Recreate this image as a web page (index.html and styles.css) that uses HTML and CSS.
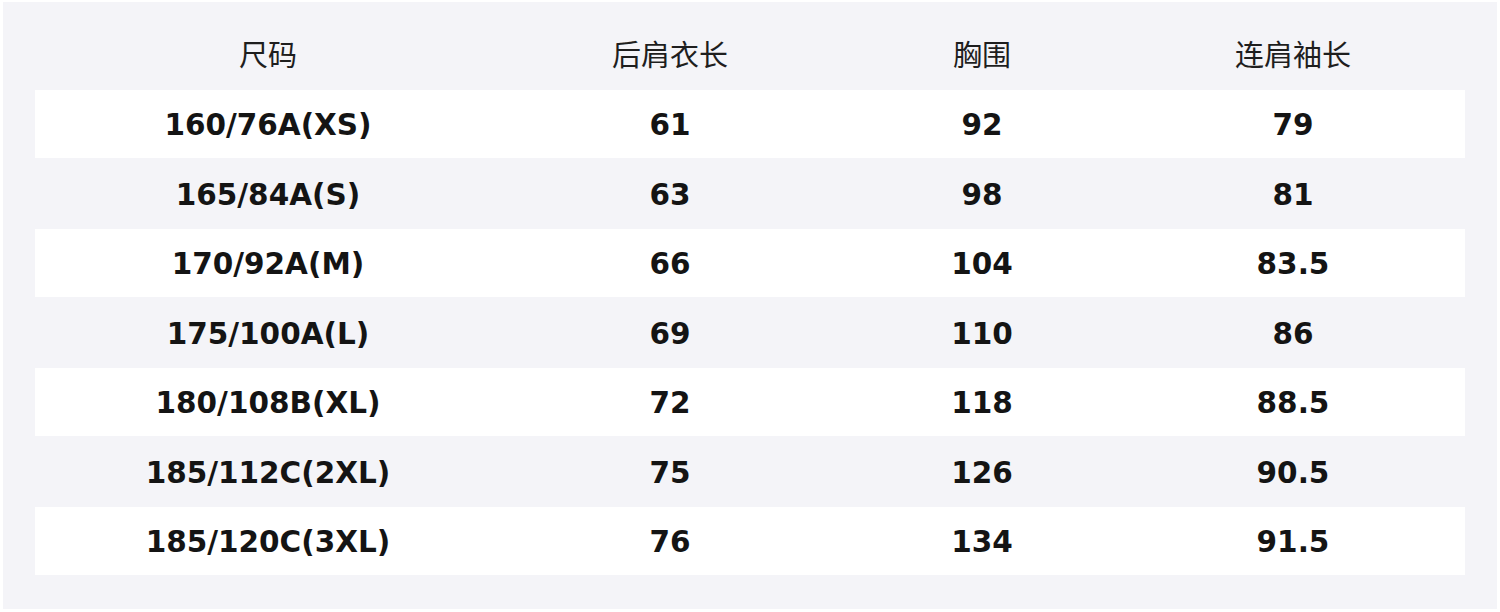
FILE: index.html
```html
<!DOCTYPE html>
<html lang="zh">
<head>
<meta charset="utf-8">
<title>尺码表</title>
<link rel="stylesheet" href="styles.css">
</head>
<body>
<div class="panel">
  <table class="size-table">
    <colgroup>
      <col class="c1"><col class="c2"><col class="c3"><col class="c4">
    </colgroup>
    <thead>
      <tr><th>尺码</th><th>后肩衣长</th><th>胸围</th><th>连肩袖长</th></tr>
    </thead>
    <tbody>
      <tr class="odd"><td>160/76A(XS)</td><td>61</td><td>92</td><td>79</td></tr>
      <tr class="even"><td>165/84A(S)</td><td>63</td><td>98</td><td>81</td></tr>
      <tr class="odd"><td>170/92A(M)</td><td>66</td><td>104</td><td>83.5</td></tr>
      <tr class="even"><td>175/100A(L)</td><td>69</td><td>110</td><td>86</td></tr>
      <tr class="odd"><td>180/108B(XL)</td><td>72</td><td>118</td><td>88.5</td></tr>
      <tr class="even"><td>185/112C(2XL)</td><td>75</td><td>126</td><td>90.5</td></tr>
      <tr class="odd"><td>185/120C(3XL)</td><td>76</td><td>134</td><td>91.5</td></tr>
    </tbody>
  </table>
</div>
</body>
</html>
```

FILE: styles.css
```css
html, body {
  margin: 0;
  padding: 0;
  background: #ffffff;
}
body {
  width: 1500px;
  height: 612px;
  overflow: hidden;
}
.panel {
  margin: 2px 3px 0 3px;
  height: 607px;
  background: #f4f4f8;
  padding: 18px 32px 0 32px;
  box-sizing: border-box;
}
.size-table {
  width: 1430px;
  border-collapse: collapse;
  table-layout: fixed;
  color: #141414;
}
.c1 { width: 466px; }
.c2 { width: 338px; }
.c3 { width: 286px; }
.c4 { width: 340px; }
.size-table th {
  height: 66px;
  padding: 0 0 4px 0;
  font-family: "Noto Sans CJK SC", "Noto Sans", sans-serif;
  font-weight: 400;
  font-size: 29px;
  color: #1e1e1e;
  text-align: center;
  vertical-align: middle;
}
.size-table td {
  box-sizing: border-box;
  padding: 4px 0 0 0;
  text-align: center;
  vertical-align: middle;
  font-family: "DejaVu Sans", sans-serif;
  font-weight: 700;
  font-size: 29.5px;
  line-height: 1;
}
.size-table th:last-child,
.size-table td:last-child {
  padding-right: 4px;
}
.size-table tr.odd td {
  height: 68px;
  background: #ffffff;
}
.size-table tr.even td {
  height: 71px;
  background: transparent;
}
```
